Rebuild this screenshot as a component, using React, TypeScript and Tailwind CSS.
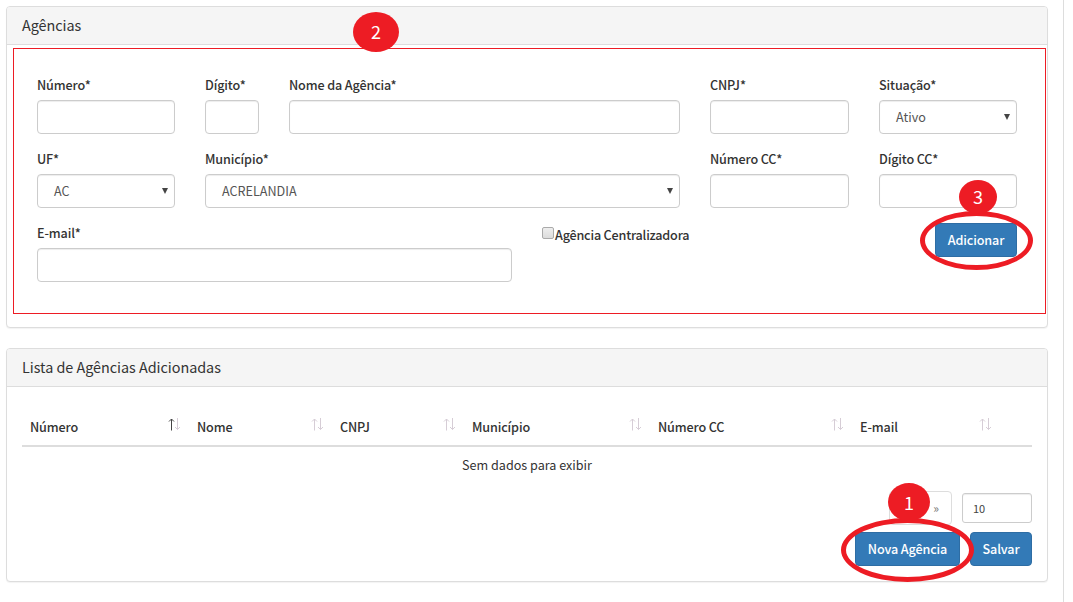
import type { ReactNode } from 'react';

const inputBox =
  'block h-[34px] w-full rounded-[4px] border border-[#ccc] bg-white shadow-[inset_0_1px_1px_rgba(0,0,0,0.075)]';

function Field({ label, width, children }: { label: string; width: string; children?: ReactNode }) {
  return (
    <div className={`shrink-0 ${width}`}>
      <label className="mb-[5px] block h-5 font-medium tracking-[-0.13px] whitespace-nowrap text-[#333]">
        {label}
      </label>
      {children ?? <input className={inputBox} />}
    </div>
  );
}

function Select({ value }: { value: string }) {
  return (
    <div className={`${inputBox} flex items-center justify-between pr-[6px] pl-4 text-[#555]`}>
      <span>{value}</span>
      <svg width="6" height="6" viewBox="0 0 6 6" className="mb-px">
        <path d="M0 0H6L3 6Z" fill="#444" />
      </svg>
    </div>
  );
}

function Panel({ title, height, children }: { title: string; height: string; children: ReactNode }) {
  return (
    <section
      className={`w-[1042px] rounded-[4px] border border-[#ddd] bg-white shadow-[0_1px_1px_rgba(0,0,0,0.05)] ${height}`}
    >
      <h3 className="h-[38px] rounded-t-[3px] border-b border-[#ddd] bg-[#f5f5f5] pl-[15px] text-[14.4px] leading-[35px] font-normal tracking-[-0.03px] text-[#333]">
        {title}
      </h3>
      {children}
    </section>
  );
}

function Button({ children, width }: { children: ReactNode; width: string }) {
  return (
    <button
      className={`h-[34px] rounded-[4px] border border-[#2e6da4] bg-[#337ab7] text-center font-medium tracking-[-0.13px] whitespace-nowrap text-white ${width}`}
    >
      {children}
    </button>
  );
}

function SortIcon({ active }: { active?: boolean }) {
  return (
    <svg width="13" height="13" viewBox="0 0 13 13" fill="none" className="mb-[14px] shrink-0">
      <path d="M3.5 12.5V1M1 3.5L3.5 1L6 3.5" stroke={active ? '#444' : '#d6cdd6'} />
      <path d="M9.5 0V11.5M7 9L9.5 11.5L12 9" stroke="#d6cdd6" />
    </svg>
  );
}

function Badge({ children, place }: { children: ReactNode; place: string }) {
  return (
    <div
      className={`absolute flex items-center justify-center rounded-[50%] bg-[#ed1c24] text-[18px] leading-none text-white ${place}`}
    >
      {children}
    </div>
  );
}

const columns = [
  { name: 'Número', width: 'w-[167px]' },
  { name: 'Nome', width: 'w-[143px]' },
  { name: 'CNPJ', width: 'w-[132px]' },
  { name: 'Município', width: 'w-[186px]' },
  { name: 'Número CC', width: 'w-[202px]' },
  { name: 'E-mail', width: 'w-[148px]' },
];

export default function App() {
  return (
    <div className="relative h-[602px] w-[1073px] overflow-hidden bg-white font-['Noto_Sans_CJK_SC','Noto_Sans_CJK_JP',sans-serif] text-[12.6px] leading-5 text-[#333]">
      <main className="flex h-full w-[1064px] flex-col gap-5 border-r border-[#ddd] pt-[6px] pl-[6px]">
        <Panel title="Agências" height="h-[322px]">
          <div className="flex flex-col gap-[15px] px-[30px] pt-[30px]">
            <div className="flex gap-[30px]">
              <Field label="Número*" width="w-[138px]" />
              <Field label="Dígito*" width="w-[54px]" />
              <Field label="Nome da Agência*" width="w-[391px]" />
              <Field label="CNPJ*" width="w-[139px]" />
              <Field label="Situação*" width="w-[138px]">
                <Select value="Ativo" />
              </Field>
            </div>
            <div className="flex gap-[30px]">
              <Field label="UF*" width="w-[138px]">
                <Select value="AC" />
              </Field>
              <Field label="Município*" width="w-[475px]">
                <Select value="ACRELANDIA" />
              </Field>
              <Field label="Número CC*" width="w-[139px]" />
              <Field label="Dígito CC*" width="w-[138px]" />
            </div>
            <div className="flex items-start">
              <Field label="E-mail*" width="w-[475px]" />
              <label className="ml-[30px] flex items-start font-medium tracking-[-0.19px]">
                <span className="mt-1 h-3 w-3 rounded-[2px] border border-[#aaa] bg-linear-to-b from-[#eee] to-[#dcdcdc]" />
                <span className="mt-0.5 ml-px">Agência Centralizadora</span>
              </label>
              <div className="ml-auto">
                <Button width="w-[82px]">Adicionar</Button>
              </div>
            </div>
          </div>
        </Panel>

        <Panel title="Lista de Agências Adicionadas" height="h-[234px]">
          <div className="px-[15px] pt-[30px]">
            <div className="flex h-[30px] border-b-2 border-[#ddd]">
              {columns.map((c, i) => (
                <div key={c.name} className={`flex shrink-0 items-center justify-between px-2 ${c.width}`}>
                  <span className="mb-2 font-medium tracking-[-0.13px]">{c.name}</span>
                  <SortIcon active={i === 0} />
                </div>
              ))}
            </div>
            <p className="h-[44px] pt-2 text-center">Sem dados para exibir</p>
            <div className="flex items-center justify-end gap-[10px]">
              <div className="flex h-[34px] w-[63px] items-center justify-end rounded-[4px] border border-[#ddd] pr-3 text-[12px] text-[#777]">
                <span>»</span>
              </div>
              <div className="flex h-[30px] w-[70px] items-center rounded-[3px] border border-[#ccc] pl-[10px] text-[11px] text-[#444] shadow-[inset_0_1px_1px_rgba(0,0,0,0.075)]">
                10
              </div>
            </div>
            <div className="mt-[7px] flex justify-end gap-[10px]">
              <Button width="w-[105px]">Nova Agência</Button>
              <Button width="w-[62px]">Salvar</Button>
            </div>
          </div>
        </Panel>
      </main>

      <div className="pointer-events-none absolute top-[48px] left-[13px] h-[266px] w-[1033px] border border-[#ed1c24]" />
      <div className="pointer-events-none absolute top-[211px] left-[920px] h-[59px] w-[113px] rounded-[50%] border-[5px] border-[#ed1c24]" />
      <div className="pointer-events-none absolute top-[518px] left-[841px] h-[64px] w-[133px] rounded-[50%] border-[5px] border-[#ed1c24]" />
      <Badge place="top-[12px] left-[353px] h-[40px] w-[46px] pb-[3px]">2</Badge>
      <Badge place="top-[180px] left-[959px] h-[34px] w-[38px] pb-[3px]">3</Badge>
      <Badge place="top-[483px] left-[888px] h-[38px] w-[42px]">1</Badge>
    </div>
  );
}
